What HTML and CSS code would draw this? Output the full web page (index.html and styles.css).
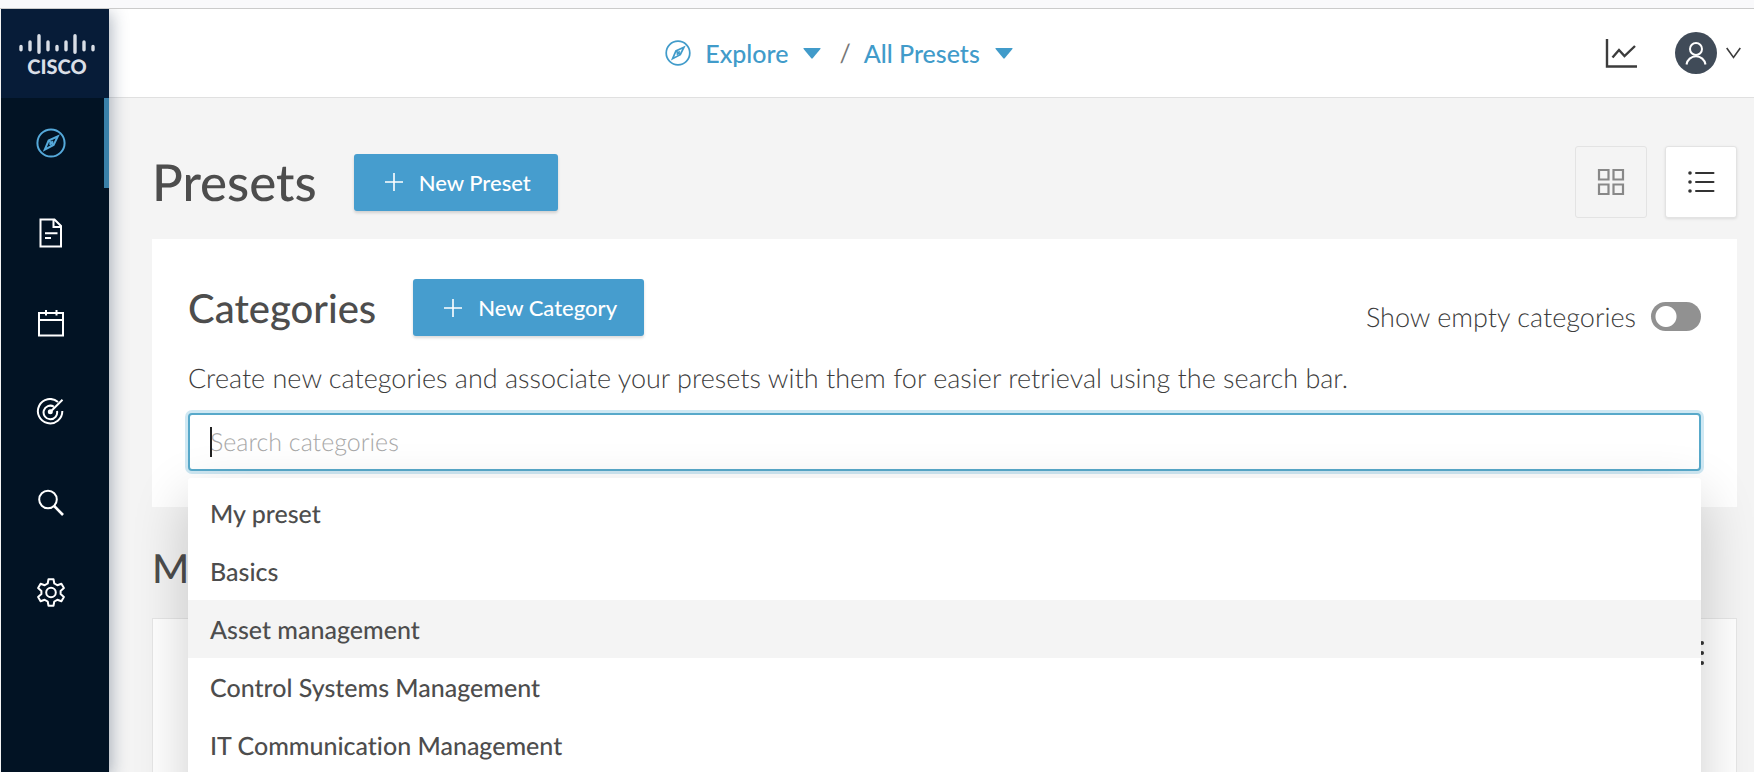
FILE: index.html
```html
<!DOCTYPE html>
<html lang="en">
<head>
<meta charset="utf-8">
<title>Presets</title>
<link rel="stylesheet" href="styles.css">
</head>
<body>
<svg class="sprite" aria-hidden="true">
  <symbol id="compass" viewBox="0 0 30 30">
    <circle cx="15" cy="15" r="13.6"/>
    <path d="M21.8 8.4 17.6 17 8.8 21.6 12.6 12.6ZM12.6 12.6 17.6 17M17 13.200 13.600 16.800"/>
  </symbol>
  <symbol id="caret" viewBox="0 0 18 11"><path d="M1 0h16q1 0 .4.9L9.7 10.3q-.7.7-1.4 0L.6.9Q0 0 1 0Z"/></symbol>
  <symbol id="plus" viewBox="0 0 18 18"><path d="M9 0v18M0 9h18" stroke-width="1.600"/></symbol>
</svg>
<div class="strip"></div>
<div class="app">
  <aside class="sidebar">
    <a class="logo" href="#" aria-label="Cisco">
      <svg viewBox="0 0 76 52" width="76" height="52">
        <g stroke="#d9dee6" stroke-width="3.4" stroke-linecap="round">
          <path d="M2 13.400v3.400M11 9v7.800M20 2.800v16.400M29 9v7.800M38 13.400v3.400M47 9v7.800M56 2.800v16.400M65 9v7.800M74 13.400v3.400"/>
        </g>
        <text class="logo-text" x="38" y="41" text-anchor="middle">CISCO</text>
      </svg>
    </a>
    <nav class="nav">
      <a class="nav-item active" href="#" aria-label="Explore"><svg width="30" height="30"><use href="#compass"/></svg></a>
      <a class="nav-item" href="#" aria-label="Reports"><svg width="30" height="30" viewBox="0 0 30 30"><path d="M4.5 1.5h14l6.500 6.500v20.500h-20.500zM17.500 1.500v7.500h7.500M9 15.200h12.500M9 20h6"/></svg></a>
      <a class="nav-item" href="#" aria-label="Events"><svg width="30" height="30" viewBox="0 0 30 30"><path d="M3 5h24v22.500h-24zM3 12h24M10 2v5.500M20.500 2v5.500"/></svg></a>
      <a class="nav-item" href="#" aria-label="Monitor"><svg width="30" height="30" viewBox="0 0 30 30"><path d="M22 3.900A12.200 12.200 0 1 0 26.300 13M17.800 8.600A6.800 6.800 0 1 0 21 13M14.500 13.800 26.500 1.800"/><circle cx="14.300" cy="13.800" r="1.500" fill="currentColor"/></svg></a>
      <a class="nav-item" href="#" aria-label="Search"><svg width="30" height="30" viewBox="0 0 30 30"><circle cx="12" cy="11.500" r="8.800"/><path d="M18.200 18 27 27" stroke-width="2.600"/></svg></a>
      <a class="nav-item" href="#" aria-label="Admin"><svg width="30" height="30" viewBox="0 0 30 30"><path d="M12.500 1.300h5l.8 4.200 3 1.700 4.100-1.500 2.500 4.300-3.300 2.900v3.200l3.300 2.900-2.500 4.300-4.100-1.500-3 1.700-.8 4.200h-5l-.8-4.200-3-1.700-4.100 1.500-2.500-4.300 3.300-2.900v-3.200l-3.300-2.900 2.500-4.300 4.100 1.500 3-1.700z" stroke-linejoin="round"/><circle cx="15" cy="14.500" r="4.800"/></svg></a>
    </nav>
  </aside>
  <div class="page">
    <header class="topbar">
      <nav class="crumbs" aria-label="Breadcrumb">
        <button class="crumb" type="button"><svg class="crumb-icon" width="26" height="26"><use href="#compass"/></svg>Explore<svg class="caret" width="18" height="11"><use href="#caret"/></svg></button>
        <span class="slash">/</span>
        <button class="crumb" type="button">All Presets<svg class="caret" width="18" height="11"><use href="#caret"/></svg></button>
      </nav>
      <div class="tools">
        <button class="tool" type="button" aria-label="Statistics"><svg width="32" height="30" viewBox="0 0 32 30"><path d="M2 1v27.500h30" stroke-width="2.400"/><path d="M7.500 19.500 14 12l5.500 6L30 8" stroke-width="2.400"/></svg></button>
        <button class="tool user" type="button" aria-label="Account">
          <svg width="42" height="42" viewBox="0 0 42 42"><circle cx="21" cy="21" r="21" fill="#404b58" stroke="none"/><g stroke="#fff" stroke-width="2"><circle cx="21" cy="17" r="6"/><path d="M11.500 32.500a9.600 9.600 0 0 1 19 0"/></g></svg>
          <svg width="15" height="12" viewBox="0 0 15 12"><path d="M.7 1 7.500 10.500 14.300 1" stroke-width="1.600"/></svg>
        </button>
      </div>
    </header>
    <main class="main">
      <div class="title-row">
        <h1 class="title">Presets</h1>
        <button class="btn" type="button"><svg width="18" height="18"><use href="#plus"/></svg>New Preset</button>
        <div class="views">
          <button class="view grid-view" type="button" aria-label="Grid view"><svg width="28" height="28" viewBox="0 0 28 28"><path d="M2 2h9.500v9.500h-9.500zM16.500 2h9.500v9.500h-9.500zM2 16.500h9.500v9.500h-9.500zM16.500 16.500h9.500v9.500h-9.500z" stroke-width="2.200"/></svg></button>
          <button class="view list-view" type="button" aria-label="List view"><svg width="28" height="28" viewBox="0 0 28 28"><path d="M9 5h17.500M9 14h17.500M9 23h17.500" stroke-width="2" stroke-linecap="round"/><g fill="currentColor" stroke="none"><circle cx="3" cy="5" r="1.800"/><circle cx="3" cy="14" r="1.800"/><circle cx="3" cy="23" r="1.800"/></g></svg></button>
        </div>
      </div>
      <section class="card">
        <div class="card-head">
          <h2 class="heading">Categories</h2>
          <button class="btn" type="button"><svg width="18" height="18"><use href="#plus"/></svg>New Category</button>
          <label class="toggle">Show empty categories<input class="switch" type="checkbox" role="switch"></label>
        </div>
        <label class="lead" for="search">Create new categories and associate your presets with them for easier retrieval using the search bar.</label>
        <div class="search">
          <input class="search-box" id="search" type="text" placeholder="Search categories">
          <span class="text-cursor"></span>
          <ul class="menu">
            <li class="option">My preset</li>
            <li class="option">Basics</li>
            <li class="option hover">Asset management</li>
            <li class="option">Control Systems Management</li>
            <li class="option">IT Communication Management</li>
          </ul>
        </div>
      </section>
      <h2 class="heading group">M</h2>
      <article class="preset">
        <button class="more" type="button" aria-label="More"><svg width="6" height="26" viewBox="0 0 6 26"><g fill="#333" stroke="none"><circle cx="3" cy="3" r="2"/><circle cx="3" cy="13" r="2"/><circle cx="3" cy="23" r="2"/></g></svg></button>
      </article>
    </main>
  </div>
</div>
</body>
</html>
```

FILE: styles.css
```css
* { box-sizing: border-box; }
body {
  margin: 0;
  height: 100vh;
  overflow: hidden;
  display: flex;
  flex-direction: column;
  background: #f4f4f4;
  color: #4d4d4d;
  font-family: Lato, "Open Sans", sans-serif;
  font-size: 25px;
  font-variant-ligatures: none;
  text-rendering: geometricPrecision;
}
button { font: inherit; color: inherit; border: 0; background: none; padding: 0; }
a { text-decoration: none; color: inherit; }
h1, h2, ul { margin: 0; padding: 0; }
svg { display: block; flex: none; fill: none; stroke: currentColor; }
.sprite { position: absolute; width: 0; height: 0; }

.strip { flex: none; height: 9px; background: #f9f9fb; border-bottom: 1px solid #cbcbcb; }
.app { flex: 1; min-height: 0; display: flex; overflow: hidden; }

.sidebar {
  flex: none;
  width: 109px;
  border-left: 1px solid #f4f4f4;
  background: #021324;
  color: #fff;
  position: relative;
  z-index: 2;
  box-shadow: 2px 4px 16px rgba(20, 40, 70, 0.35);
}
.logo { display: flex; justify-content: center; padding: 24px 0 0 4px; height: 89px; background: #071c38; }
.logo-text { font-family: Lato, sans-serif; font-size: 20px; font-weight: 900; fill: #d9dee6; stroke: none; }
.nav-item { display: flex; align-items: center; justify-content: center; height: 90px; padding-right: 8px; }
.nav-item svg { stroke-width: 2; }
.active { color: #55a9da; border-right: 5px solid #3a80a8; padding-right: 3px; }

.page { flex: 1; min-width: 0; }
.topbar {
  display: flex;
  align-items: center;
  height: 89px;
  background: #fff;
  border-bottom: 1px solid #e0e0e0;
}
.crumbs { flex: 1; display: flex; align-items: center; justify-content: center; color: #419bca; }
.crumb { display: flex; align-items: center; font-weight: 500; }
.crumb-icon { margin-right: 14px; stroke-width: 2; }
.caret { margin-left: 15px; fill: currentColor; stroke: none; }
.slash { color: #777; margin: 0 13px 0 18px; }
.tools { display: flex; align-items: center; gap: 38px; padding: 0 13px 0 36px; color: #3c3c3c; }
.user { display: flex; align-items: center; gap: 9px; }

.main { padding: 48px 17px 0 43px; }
.title-row { display: flex; align-items: center; }
.title { font-size: 51px; line-height: 60px; font-weight: 500; }
.btn {
  display: flex;
  align-items: center;
  gap: 16px;
  height: 57px;
  margin-left: 37px;
  padding: 0 27px 0 31px;
  border-radius: 3px;
  background: #469dce;
  color: #fff;
  font-size: 22px;
  font-weight: 500;
  box-shadow: 0 2px 3px rgba(0, 0, 0, 0.15);
}
.views { display: flex; gap: 18px; margin-left: auto; }
.view { display: grid; place-items: center; width: 72px; height: 72px; border: 1px solid #e3e3e3; border-radius: 3px; }
.grid-view { color: #888; }
.list-view { background: #fff; color: #333; box-shadow: 0 1px 3px rgba(0, 0, 0, 0.1); }

.card { margin-top: 21px; padding: 40px 36px 36px; background: #fff; }
.card-head { display: flex; align-items: center; }
.heading { font-size: 40px; line-height: 48px; font-weight: 500; }
.toggle { display: flex; align-items: center; gap: 15px; margin: 18px 0 0 auto; color: #3c3c3c; font-size: 27px; line-height: 38px; font-weight: 300; }
.switch {
  appearance: none;
  width: 50px;
  height: 29px;
  margin: 0;
  border-radius: 15px;
  background: radial-gradient(circle at 15px 50%, #fff 10px, #919191 11px);
}
.lead { display: block; margin-top: 25px; color: #3c3c3c; font-size: 27px; line-height: 34px; font-weight: 300; }
.search { position: relative; margin-top: 18px; }
.search-box {
  display: block;
  width: 100%;
  height: 58px;
  padding: 0 20px;
  border: 2px solid #58a9ca;
  border-radius: 4px;
  background: #fff;
  box-shadow: 0 0 0 3px #cfe8f3;
  outline: 0;
  font: 300 25px Lato, sans-serif;
  text-rendering: inherit;
}
.search-box::placeholder { color: #a8a8a8; }
.text-cursor { position: absolute; left: 22px; top: 14px; width: 2px; height: 30px; background: #222; }
.menu {
  position: absolute;
  z-index: 1;
  left: 0;
  right: 0;
  top: 65px;
  padding: 6px 0 40px;
  list-style: none;
  background: #fff;
  border-radius: 3px;
  box-shadow: 0 20px 56px rgba(0, 0, 0, 0.2);
}
.option { padding: 15px 22px 13px; line-height: 30px; font-weight: 500; }
.hover { background: #f4f4f4; }

.group { margin-top: 37px; }
.preset { display: flex; justify-content: flex-end; align-items: flex-start; min-height: 200px; margin-top: 26px; padding: 21px 31px; background: #fff; border: 1px solid #e6e6e6; }
```
